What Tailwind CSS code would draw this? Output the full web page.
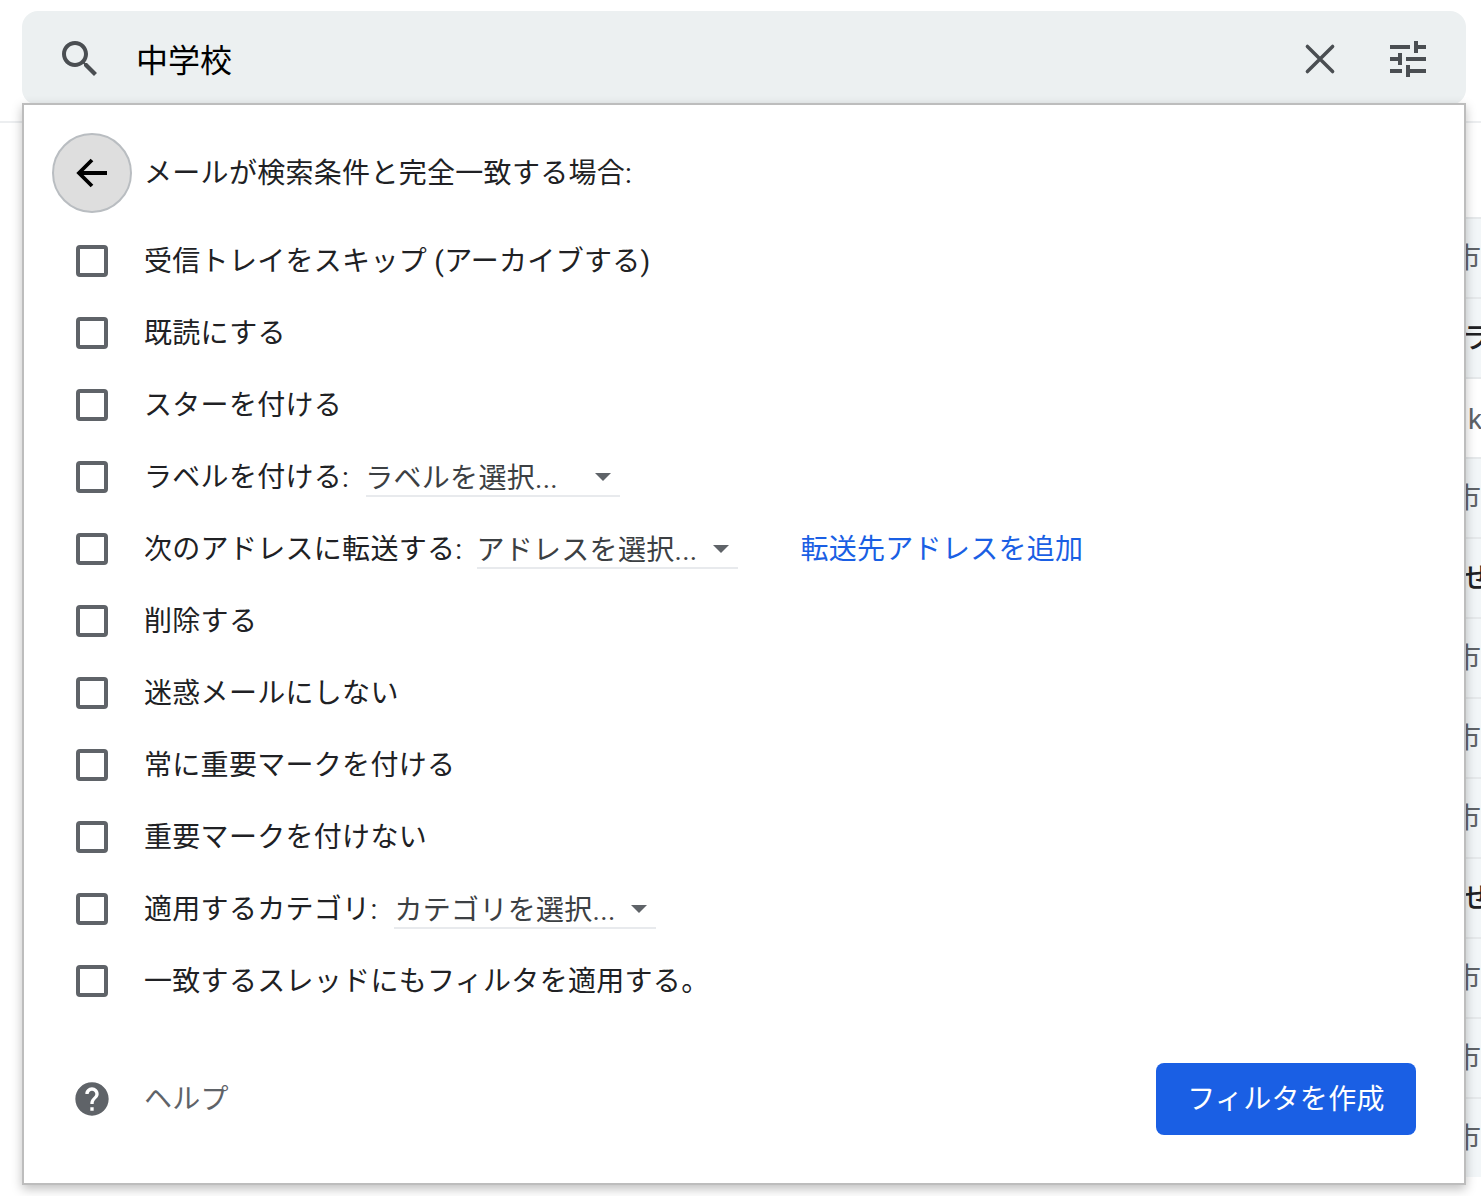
<!DOCTYPE html>
<html lang="ja">
<head>
<meta charset="utf-8">
<script src="https://cdn.jsdelivr.net/npm/@tailwindcss/browser@4"></script>
<title>フィルタ</title>
</head>
<body class="bg-white">
<div class="relative w-[1481px] h-[1196px] overflow-hidden bg-white font-['Roboto','Noto_Sans_CJK_JP',sans-serif] text-[28px] leading-[40px] tracking-[0.3px] text-[#202124]">

  <!-- page behind the dialog -->
  <div class="h-[123px] border-b-2 border-[#eceef0]"></div>
  <div class="h-[94px]"></div>
  <div class="ml-[23px] flex flex-col text-[#5f6368]">
    <div class="h-[80px] bg-[#f2f6f8] border-t-2 border-[#e6e9eb] pl-[1430px] pt-[20px] whitespace-nowrap">市</div>
    <div class="h-[80px] bg-[#f2f6f8] border-t-2 border-[#e6e9eb] pl-[1439px] pt-[20px] whitespace-nowrap text-[#202124] font-medium">ラ</div>
    <div class="h-[80px] bg-white border-t-2 border-[#e6e9eb] pl-[1445px] pt-[21px] whitespace-nowrap">k</div>
    <div class="h-[80px] bg-[#f2f6f8] border-t-2 border-[#e6e9eb] pl-[1430px] pt-[20px] whitespace-nowrap">市</div>
    <div class="h-[80px] bg-[#f2f6f8] border-t-2 border-[#e6e9eb] pl-[1439px] pt-[20px] whitespace-nowrap text-[#202124] font-medium">せ</div>
    <div class="h-[80px] bg-[#f2f6f8] border-t-2 border-[#e6e9eb] pl-[1430px] pt-[20px] whitespace-nowrap">市</div>
    <div class="h-[80px] bg-[#f2f6f8] border-t-2 border-[#e6e9eb] pl-[1430px] pt-[20px] whitespace-nowrap">市</div>
    <div class="h-[80px] bg-[#f2f6f8] border-t-2 border-[#e6e9eb] pl-[1430px] pt-[20px] whitespace-nowrap">市</div>
    <div class="h-[80px] bg-[#f2f6f8] border-t-2 border-[#e6e9eb] pl-[1439px] pt-[20px] whitespace-nowrap text-[#202124] font-medium">せ</div>
    <div class="h-[80px] bg-[#f2f6f8] border-t-2 border-[#e6e9eb] pl-[1430px] pt-[20px] whitespace-nowrap">市</div>
    <div class="h-[80px] bg-[#f2f6f8] border-t-2 border-[#e6e9eb] pl-[1430px] pt-[20px] whitespace-nowrap">市</div>
    <div class="h-[80px] bg-[#f2f6f8] border-t-2 border-[#e6e9eb] pl-[1430px] pt-[20px] whitespace-nowrap">市</div>
  </div>

  <!-- search bar -->
  <div class="absolute left-[22px] top-[11px] w-[1444px] h-[94px] rounded-[16px] bg-[#ecf0f1] flex items-start pt-[24px] text-black">
    <svg class="ml-[34px] w-[48px] h-[48px] shrink-0" viewBox="0 0 24 24" fill="#4a4e52"><path d="M15.5 14h-.79l-.28-.27C15.41 12.59 16 11.11 16 9.5 16 5.91 13.09 3 9.5 3S3 5.91 3 9.5 5.91 16 9.5 16c1.61 0 3.09-.59 4.23-1.57l.27.28v.79l5 4.99L20.49 19l-4.99-5zm-6 0C7.01 14 5 11.99 5 9.5S7.01 5 9.5 5 14 7.01 14 9.5 11.99 14 9.5 14z"/></svg>
    <span class="ml-[32px] mt-[2px] text-[32px] leading-[48px] tracking-normal">中学校</span>
    <svg class="ml-auto w-[48px] h-[48px] shrink-0" viewBox="0 0 24 24" fill="none" stroke="#4a4e52" stroke-width="1.75" stroke-linecap="round"><path d="M5.7 5.7l12.6 12.6M18.3 5.7L5.7 18.3"/></svg>
    <svg class="ml-[40px] mr-[34px] w-[48px] h-[48px] shrink-0" viewBox="0 0 24 24" fill="#4a4e52"><path d="M3 17v2h6v-2H3zM3 5v2h10V5H3zm10 16v-2h8v-2h-8v-2h-2v6h2zM7 9v2H3v2h4v2h2V9H7zm14 4v-2H11v2h10zm-6-4h2V7h4V5h-4V3h-2v6z"/></svg>
  </div>

  <!-- filter dialog -->
  <div class="absolute left-[22px] top-[103px] w-[1444px] h-[1082px] bg-white border-2 border-[#bdbdbd] shadow-[0_4px_10px_rgba(0,0,0,0.25)] flex flex-col pt-[28px]">
    <div class="flex items-center ml-[28px] h-[80px]">
      <div class="w-[80px] h-[80px] rounded-full bg-[#dedede] border-2 border-[#b9bdc1] flex items-center justify-center shrink-0">
        <svg class="w-[48px] h-[48px]" viewBox="0 0 24 24" fill="none" stroke="#000" stroke-width="1.9"><path d="M19.5 12H6M12 5.5L5.5 12l6.5 6.5"/></svg>
      </div>
      <span class="ml-[12px] pt-[2px] whitespace-nowrap">メールが検索条件と完全一致する場合:</span>
    </div>

    <div class="mt-[12px] ml-[52px] flex flex-col">
      <div class="h-[72px] flex items-center"><span class="w-[32px] h-[32px] rounded-[4px] border-[4px] border-[#5f6368] shrink-0"></span><span class="ml-[36px] pt-[2px] whitespace-nowrap">受信トレイをスキップ (アーカイブする)</span></div>
      <div class="h-[72px] flex items-center"><span class="w-[32px] h-[32px] rounded-[4px] border-[4px] border-[#5f6368] shrink-0"></span><span class="ml-[36px] pt-[2px] whitespace-nowrap">既読にする</span></div>
      <div class="h-[72px] flex items-center"><span class="w-[32px] h-[32px] rounded-[4px] border-[4px] border-[#5f6368] shrink-0"></span><span class="ml-[36px] pt-[2px] whitespace-nowrap">スターを付ける</span></div>
      <div class="h-[72px] flex items-center">
        <span class="w-[32px] h-[32px] rounded-[4px] border-[4px] border-[#5f6368] shrink-0"></span><span class="ml-[36px] pt-[2px] whitespace-nowrap">ラベルを付ける:</span>
        <div class="ml-[17px] w-[254px] h-[40px] pt-[5px] border-b-2 border-[#e8eaed] flex items-center relative text-[#3c4043] whitespace-nowrap"><span class="-ml-[1px]">ラベルを選択...</span>
          <span class="absolute right-[9px] top-[16px] w-0 h-0 border-x-[8px] border-x-transparent border-t-[8px] border-t-[#5f6368]"></span>
        </div>
      </div>
      <div class="h-[72px] flex items-center">
        <span class="w-[32px] h-[32px] rounded-[4px] border-[4px] border-[#5f6368] shrink-0"></span><span class="ml-[36px] pt-[2px] whitespace-nowrap">次のアドレスに転送する:</span>
        <div class="ml-[15px] w-[261px] h-[40px] pt-[5px] border-b-2 border-[#e8eaed] flex items-center relative text-[#3c4043] whitespace-nowrap"><span class="-ml-[1px]">アドレスを選択...</span>
          <span class="absolute right-[9px] top-[16px] w-0 h-0 border-x-[8px] border-x-transparent border-t-[8px] border-t-[#5f6368]"></span>
        </div>
        <span class="ml-[62px] pt-[2px] text-[#1a5fe4] whitespace-nowrap">転送先アドレスを追加</span>
      </div>
      <div class="h-[72px] flex items-center"><span class="w-[32px] h-[32px] rounded-[4px] border-[4px] border-[#5f6368] shrink-0"></span><span class="ml-[36px] pt-[2px] whitespace-nowrap">削除する</span></div>
      <div class="h-[72px] flex items-center"><span class="w-[32px] h-[32px] rounded-[4px] border-[4px] border-[#5f6368] shrink-0"></span><span class="ml-[36px] pt-[2px] whitespace-nowrap">迷惑メールにしない</span></div>
      <div class="h-[72px] flex items-center"><span class="w-[32px] h-[32px] rounded-[4px] border-[4px] border-[#5f6368] shrink-0"></span><span class="ml-[36px] pt-[2px] whitespace-nowrap">常に重要マークを付ける</span></div>
      <div class="h-[72px] flex items-center"><span class="w-[32px] h-[32px] rounded-[4px] border-[4px] border-[#5f6368] shrink-0"></span><span class="ml-[36px] pt-[2px] whitespace-nowrap">重要マークを付けない</span></div>
      <div class="h-[72px] flex items-center">
        <span class="w-[32px] h-[32px] rounded-[4px] border-[4px] border-[#5f6368] shrink-0"></span><span class="ml-[36px] pt-[2px] whitespace-nowrap">適用するカテゴリ:</span>
        <div class="ml-[17px] w-[262px] h-[40px] pt-[5px] border-b-2 border-[#e8eaed] flex items-center relative text-[#3c4043] whitespace-nowrap">カテゴリを選択...
          <span class="absolute right-[9px] top-[16px] w-0 h-0 border-x-[8px] border-x-transparent border-t-[8px] border-t-[#5f6368]"></span>
        </div>
      </div>
      <div class="h-[72px] flex items-center"><span class="w-[32px] h-[32px] rounded-[4px] border-[4px] border-[#5f6368] shrink-0"></span><span class="ml-[36px] pt-[2px] whitespace-nowrap">一致するスレッドにもフィルタを適用する。</span></div>
    </div>

    <div class="mt-[46px] ml-[52px] mr-[48px] flex items-center justify-between">
      <div class="flex items-center">
        <svg class="w-[40px] h-[40px] -ml-[4px] shrink-0" viewBox="0 0 24 24" fill="#5f6368"><path d="M12 2C6.48 2 2 6.48 2 12s4.48 10 10 10 10-4.48 10-10S17.52 2 12 2zm1 17h-2v-2h2v2zm2.07-7.75l-.9.92C13.45 12.9 13 13.5 13 15h-2v-.5c0-1.1.45-2.1 1.17-2.83l1.24-1.26c.37-.36.59-.86.59-1.41 0-1.1-.9-2-2-2s-2 .9-2 2H8c0-2.21 1.79-4 4-4s4 1.79 4 4c0 .88-.36 1.68-.93 2.25z"/></svg>
        <span class="ml-[32px] pt-[2px] text-[#5f6368]">ヘルプ</span>
      </div>
      <div class="w-[260px] h-[72px] pt-[2px] rounded-[8px] bg-[#1a5fe4] text-white flex items-center justify-center">フィルタを作成</div>
    </div>
  </div>
</div>
</body>
</html>
